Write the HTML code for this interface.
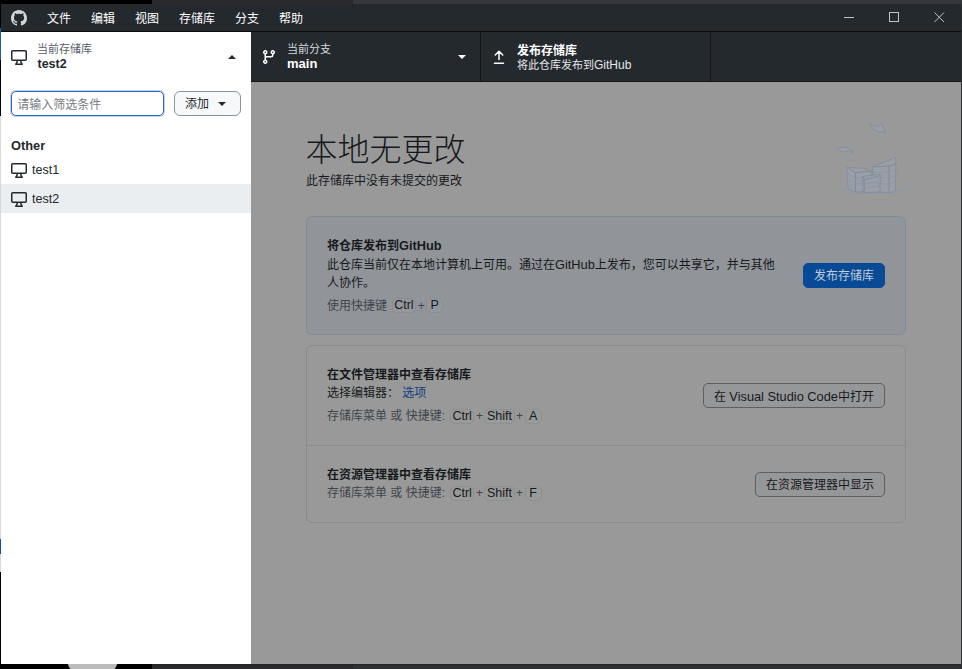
<!DOCTYPE html>
<html lang="zh-CN">
<head>
<meta charset="utf-8">
<title>GitHub Desktop</title>
<style>
*{box-sizing:border-box;margin:0;padding:0}
html,body{width:962px;height:669px;overflow:hidden;background:#000}
body{position:relative;font-family:"Liberation Sans","Noto Sans CJK SC",sans-serif;font-size:12px;color:#24292e}
.abs{position:absolute}
svg{display:block;position:absolute}
/* desktop peeking behind window */
#bgtop1{left:152px;top:0;width:201px;height:4px;background:#2a2a2c}
#bgtop2{left:353px;top:0;width:609px;height:4px;background:#34383c}
#bgbot{left:152px;top:664px;width:810px;height:5px;background:linear-gradient(90deg,#29292c 0,#29292c 201px,#2f3135 201px);}
#bgbot:after{content:"";position:absolute;left:0;top:0;width:100%;height:2px;background:linear-gradient(rgba(0,0,0,.25),rgba(0,0,0,0))}
#blob{left:67px;top:640px;width:51px;height:35px;background:#bcbcbc;border-radius:0 0 16px 16px}
#redge{left:961px;top:4px;width:1px;height:665px;background:#2d2f33}
.le{left:0;width:1px}
/* window */
#win{left:1px;top:4px;width:960px;height:660px;background:#fff;overflow:hidden}
#titlebar{left:0;top:0;width:960px;height:28px;background:#24292e;border-bottom:1px solid #0a0c0e;color:#fff}
.menu{position:absolute;top:7px;font-size:12px;line-height:16px;color:#fff;white-space:nowrap}
#toolbar{left:0;top:28px;width:960px;height:50px;background:#24292e;border-bottom:1px solid #141414}
.tbtn{position:absolute;top:0;height:49px;border-right:1px solid #141414;color:#fff}
.tbtn .desc{position:absolute;left:36px;top:10px;font-size:11px;line-height:14px;color:#d7dbdf;white-space:nowrap}
.tbtn .title{position:absolute;left:36px;top:24px;font-size:12px;line-height:16px;font-weight:bold;white-space:nowrap}
#repo{left:0;width:250px;height:50px;background:#fff;color:#24292e;border-right:none}
#repo .desc{color:#586069}
#fold{left:0;top:78px;width:250px;height:582px;background:#fff}
#main{left:250px;top:78px;width:710px;height:582px;background:#999;overflow:hidden}
#filter{left:10px;top:9px;width:153px;height:25px;border:1px solid #2b66bb;border-radius:5px;box-shadow:0 0 0 1px rgba(43,107,199,.3);font-size:12px;line-height:23px;padding-top:2px;padding-left:5.3px;color:#767d84;background:#fff;white-space:nowrap}
#add{left:173px;top:9px;width:67px;height:25px;border:1px solid #8b949e;border-radius:6px;background:#f6f8fa;font-size:12px;line-height:23px;padding-top:1px;padding-left:10px;color:#24292e}
.caret{position:absolute;width:0;height:0;border-left:4px solid transparent;border-right:4px solid transparent;border-top:4px solid currentColor}
.caretup{position:absolute;width:0;height:0;border-left:4px solid transparent;border-right:4px solid transparent;border-bottom:4px solid currentColor}
#grp{left:10px;top:56px;font-weight:bold;font-size:12.8px;line-height:16px}
.row{position:absolute;left:0;width:250px;height:29px;font-size:12.5px;line-height:29px;padding-top:1px;padding-left:31px;color:#24292e}
.row.sel{background:#ebeef1}
.row svg{left:10px;top:7px}
/* main */
#h1{left:54.5px;top:46px;font-size:32px;line-height:44px;font-weight:300;color:#16191c;white-space:nowrap}
#sub{left:55px;top:91px;font-size:12px;line-height:16px;white-space:nowrap;color:#16191c}
.card{position:absolute;left:55px;width:600px;border-radius:6px}
#c1{top:134px;height:119px;background:#919599;border:1px solid #808b9a}
#c2{top:263px;height:178px;background:#999;border:1px solid #898b8d}
.t{position:absolute;left:20px;font-size:12px;line-height:18px;white-space:nowrap;color:#16191c}
.t.b{font-weight:bold}
.t.g{color:#40454b}
.l{font-size:12.8px}
.kbd{display:inline-block;border:1px solid #8b8d90;border-radius:5px;padding:0 1.5px;min-width:17px;text-align:center;height:15px;line-height:13px;color:#16191c;background:#969798;vertical-align:1px;font-size:12.5px}
#c1 .kbd{background:#94989c;border-color:#8a8f96}
#c2 .kbd{vertical-align:0;background:#999a9a;border-color:#8d8f91}
.pl{margin:0 -1.8px}
.btn{position:absolute;height:25px;border-radius:5px;font-size:12px;line-height:23px;text-align:center;white-space:nowrap;border:1px solid #5d6063;background:#969798;color:#16191c;padding-top:1px}
.btn.pri{background:#084a96;border-color:#084a96;color:#c3ccd6}
a{color:#0c3f80;text-decoration:none}
</style>
</head>
<body>
<div class="abs" id="bgtop1"></div>
<div class="abs" id="bgtop2"></div>
<div class="abs" id="bgbot"></div>
<div class="abs" id="blob"></div>
<div class="abs" id="redge"></div>
<div class="abs" id="win">
  <div class="abs" id="titlebar">
    <svg style="left:10px;top:6px" width="16" height="16" viewBox="0 0 16 16"><path fill="#d1d5da" d="M8 0c4.42 0 8 3.58 8 8a8.013 8.013 0 0 1-5.45 7.59c-.4.08-.55-.17-.55-.38 0-.27.01-1.13.01-2.2 0-.75-.25-1.23-.54-1.48 1.78-.2 3.65-.88 3.65-3.95 0-.88-.31-1.59-.82-2.15.08-.2.36-1.02-.08-2.12 0 0-.67-.22-2.2.82-.64-.18-1.32-.27-2-.27-.68 0-1.36.09-2 .27-1.53-1.03-2.2-.82-2.2-.82-.44 1.1-.16 1.92-.08 2.12-.51.56-.82 1.28-.82 2.15 0 3.06 1.86 3.75 3.64 3.95-.23.2-.44.55-.51 1.07-.46.21-1.61.55-2.33-.66-.15-.24-.6-.83-1.23-.82-.67.01-.27.38.01.53.34.19.73.9.82 1.13.16.45.68 1.31 2.69.94 0 .67.01 1.3.01 1.49 0 .21-.15.45-.55.38A7.995 7.995 0 0 1 0 8c0-4.42 3.58-8 8-8Z"/></svg>
    <span class="menu" style="left:46px">文件</span>
    <span class="menu" style="left:90px">编辑</span>
    <span class="menu" style="left:134px">视图</span>
    <span class="menu" style="left:178px">存储库</span>
    <span class="menu" style="left:234px">分支</span>
    <span class="menu" style="left:278px">帮助</span>
    <svg style="left:838px;top:0" width="122" height="28" viewBox="0 0 122 28"><g stroke="#c2c4c6" stroke-width="1" fill="none"><path d="M5 13.5h10"/><rect x="50.5" y="8.5" width="9" height="9"/><path d="M95.500 8.500l9.500 9.500M105 8.500l-9.500 9.500"/></g></svg>
  </div>
  <div class="abs" id="toolbar">
    <div class="tbtn" id="repo">
      <svg style="left:10px;top:17px" width="16" height="16" viewBox="0 0 16 16"><path fill="#24292e" d="M14.25 1c.966 0 1.75.784 1.75 1.75v7.5A1.75 1.75 0 0 1 14.25 12h-3.727c.099 1.041.52 1.872 1.292 2.757A.752.752 0 0 1 11.25 16h-6.5a.75.75 0 0 1-.565-1.243c.772-.885 1.192-1.716 1.292-2.757H1.75A1.75 1.75 0 0 1 0 10.25v-7.5C0 1.784.784 1 1.750 1ZM1.75 2.500a.25.25 0 0 0-.25.25v7.500c0 .138.112.25.25.25h12.500a.25.25 0 0 0 .25-.25v-7.500a.25.25 0 0 0-.25-.25ZM9.018 12H6.982a5.720 5.720 0 0 1-.765 2.500h3.566a5.720 5.720 0 0 1-.765-2.500Z"/></svg>
      <span class="desc">当前存储库</span>
      <span class="title" style="font-size:12.5px;left:36.5px">test2</span>
      <i class="caretup" style="left:227px;top:23px"></i>
    </div>
    <div class="tbtn" style="left:250px;width:230px">
      <svg style="left:10px;top:17px" width="16" height="16" viewBox="0 0 16 16"><path fill="#fff" d="M9.5 3.25a2.250 2.250 0 1 1 3 2.122V6A2.500 2.500 0 0 1 10 8.500H6a1 1 0 0 0-1 1v1.128a2.251 2.251 0 1 1-1.500 0V5.372a2.250 2.250 0 1 1 1.500 0v1.836A2.493 2.493 0 0 1 6 7h4a1 1 0 0 0 1-1v-.628A2.250 2.250 0 0 1 9.500 3.250Zm-6 0a.75.75 0 1 0 1.500 0 .75.75 0 0 0-1.500 0Zm8.250-.75a.75.75 0 1 0 0 1.500.75.75 0 0 0 0-1.500ZM4.250 12a.75.75 0 1 0 0 1.500.75.75 0 0 0 0-1.500Z"/></svg>
      <span class="desc">当前分支</span>
      <span class="title" style="font-size:13px">main</span>
      <i class="caret" style="left:207px;top:23px"></i>
    </div>
    <div class="tbtn" style="left:480px;width:230px">
      <svg style="left:10px;top:17px" width="16" height="16" viewBox="0 0 16 16"><g stroke="#fff" stroke-width="1.5" fill="none" stroke-linecap="round" stroke-linejoin="round"><path d="M8 10.500V2.500M4.250 6L8 2.250 11.750 6M3.500 14.250h9"/></g></svg>
      <span class="title" style="top:11px">发布存储库</span>
      <span class="desc" style="top:26px;color:#e6e8ea">将此仓库发布到<span style="font-size:12px">GitHub</span></span>
    </div>
  </div>
  <div class="abs" id="fold">
    <div class="abs" id="filter">请输入筛选条件</div>
    <div class="abs" id="add">添加<i class="caret" style="left:43px;top:10px"></i></div>
    <div class="abs" id="grp">Other</div>
    <div class="row" style="top:73px"><svg width="16" height="16" viewBox="0 0 16 16"><path fill="#24292e" d="M14.25 1c.966 0 1.75.784 1.75 1.75v7.5A1.75 1.75 0 0 1 14.25 12h-3.727c.099 1.041.52 1.872 1.292 2.757A.752.752 0 0 1 11.25 16h-6.5a.75.75 0 0 1-.565-1.243c.772-.885 1.192-1.716 1.292-2.757H1.75A1.75 1.75 0 0 1 0 10.25v-7.5C0 1.784.784 1 1.750 1ZM1.75 2.500a.25.25 0 0 0-.25.25v7.500c0 .138.112.25.25.25h12.500a.25.25 0 0 0 .25-.25v-7.500a.25.25 0 0 0-.25-.25ZM9.018 12H6.982a5.720 5.720 0 0 1-.765 2.500h3.566a5.720 5.720 0 0 1-.765-2.500Z"/></svg>test1</div>
    <div class="row sel" style="top:102px"><svg width="16" height="16" viewBox="0 0 16 16"><path fill="#24292e" d="M14.25 1c.966 0 1.75.784 1.75 1.75v7.5A1.75 1.75 0 0 1 14.25 12h-3.727c.099 1.041.52 1.872 1.292 2.757A.752.752 0 0 1 11.25 16h-6.5a.75.75 0 0 1-.565-1.243c.772-.885 1.192-1.716 1.292-2.757H1.75A1.75 1.75 0 0 1 0 10.25v-7.5C0 1.784.784 1 1.750 1ZM1.75 2.500a.25.25 0 0 0-.25.25v7.500c0 .138.112.25.25.25h12.500a.25.25 0 0 0 .25-.25v-7.500a.25.25 0 0 0-.25-.25ZM9.018 12H6.982a5.720 5.720 0 0 1-.765 2.500h3.566a5.720 5.720 0 0 1-.765-2.500Z"/></svg>test2</div>
  </div>
  <div class="abs" id="main">
<svg style="left:569px;top:28px" width="100" height="95" viewBox="0 0 704 669">
      <ellipse cx="372" cy="574" rx="232" ry="15" fill="#8e98a5" opacity=".8"/>
      <g fill="#9b9fa5" stroke="#7a8aa1" stroke-width="5" stroke-linejoin="round">
        <path d="M190 405L305 410 365 432 250 442Z"/>
        <path d="M190 405L250 442 250 578 198 552Z"/>
        <path d="M250 442L365 432 365 572 250 578Z"/>
        <path d="M370 400L530 335 535 378 487 396Z"/>
        <path d="M370 400L487 396 487 582 380 572Z"/>
        <path d="M487 396L535 378 530 570 487 582Z"/>
        <path d="M300 468L420 452 425 462 312 492Z"/>
        <path d="M300 468L312 492 312 580 302 572Z"/>
        <path d="M312 492L425 462 422 578 312 580Z"/>
        <path d="M351 97Q366 136 400 150L463 155 430 95Q405 138 351 97Z"/>
        <path d="M118 275Q150 256 200 268 226 280 235 305 215 284 195 288 165 306 118 275Z"/>
      </g>
      <g fill="none" stroke="#8291a6" stroke-width="4">
        <path d="M196 450L250 480M196 490L250 520M197 525L250 552M250 480L312 474M250 520L305 515"/>
        <path d="M378 440L487 436M378 480L487 478M380 520L487 520M487 436L533 420M487 478L532 462M487 520L531 505"/>
        <path d="M312 520L423 500M312 550L422 536"/>
      </g>
    </svg>
    <div class="abs" id="h1">本地无更改</div>
    <div class="abs" id="sub">此存储库中没有未提交的更改</div>
    <div class="card" id="c1">
      <div class="t b" style="top:20px">将仓库发布到<span class="l">GitHub</span></div>
      <div class="t" style="top:39px">此仓库当前仅在本地计算机上可用。通过在<span class="l">GitHub</span>上发布，您可以共享它，并与其他</div>
      <div class="t" style="top:57px">人协作。</div>
      <div class="t g" style="top:80px">使用快捷键 <span class="kbd" style="margin-left:1.3px">Ctrl</span><span class="pl"> + </span><span class="kbd">P</span></div>
      <div class="btn pri" style="left:496px;top:46px;width:82px">发布存储库</div>
    </div>
    <div class="card" id="c2">
      <div class="t b" style="top:20px">在文件管理器中查看存储库</div>
      <div class="t" style="top:38px">选择编辑器： <a>选项</a></div>
      <div class="t g" style="top:61px">存储库菜单 或 快捷键: <span class="kbd" style="margin-left:1.6px">Ctrl</span><span class="pl"> + </span><span class="kbd">Shift</span><span class="pl"> + </span><span class="kbd">A</span></div>
      <div class="btn" style="left:396px;top:37px;width:182px">在 <span class="l">Visual Studio Code</span>中打开</div>
      <div class="abs" style="left:0;top:99px;width:598px;height:1px;background:#898b8d"></div>
      <div class="t b" style="top:120px">在资源管理器中查看存储库</div>
      <div class="t g" style="top:138px">存储库菜单 或 快捷键: <span class="kbd" style="margin-left:1.6px">Ctrl</span><span class="pl"> + </span><span class="kbd">Shift</span><span class="pl"> + </span><span class="kbd">F</span></div>
      <div class="btn" style="left:448px;top:126px;width:130px">在资源管理器中显示</div>
    </div>
  </div>
</div>
<div class="abs le" style="top:28px;height:32px;background:#1f5a99"></div>
<div class="abs le" style="top:116px;height:456px;background:#d8d8d8"></div>
<div class="abs le" style="top:539px;height:15px;background:#1d4f87"></div>
</body>
</html>
